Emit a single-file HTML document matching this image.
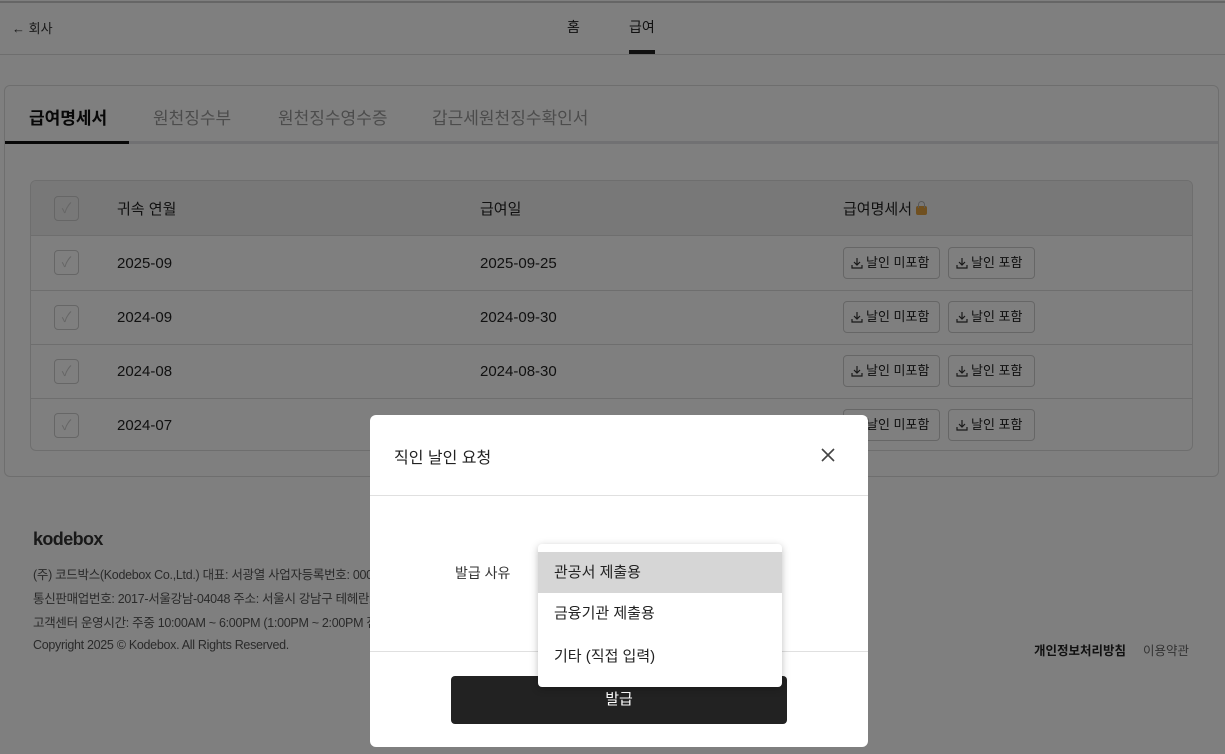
<!DOCTYPE html>
<html><head><meta charset="utf-8"><style>
*{box-sizing:border-box;margin:0;padding:0}
body{width:1225px;height:754px;overflow:hidden;background:#fff;font-family:"Liberation Sans","Noto Sans CJK KR",sans-serif;color:#222;position:relative}
.abs{position:absolute;white-space:nowrap}
.topline{position:absolute;left:0;top:0;width:1225px;height:3px;border-bottom:2px solid #ccc}
.hdr{position:absolute;left:0;top:54px;width:1225px;height:1px;background:#ddd}
.panel{position:absolute;left:4px;top:85px;width:1215px;height:392px;border:1px solid #ddd;border-radius:6px;background:#fff}
.tabline{position:absolute;left:5px;top:141px;width:1213px;height:3px;background:#e3e3e6}
.tabact{position:absolute;left:5px;top:141px;width:124px;height:3px;background:#111}
.tbl{position:absolute;left:30px;top:180px;width:1163px;height:271px;border:1px solid #ddd;border-radius:6px;overflow:hidden}
.row{position:absolute;left:0;width:100%;border-bottom:1px solid #ddd}
.cb{position:absolute;left:23px;width:25px;height:25px;border:1px solid #ccc;border-radius:4px;color:#ccc;font-size:14px;text-align:center;line-height:23px}
.cell{position:absolute;font-size:15px;color:#222}
.btn{position:absolute;height:32px;border:1px solid #ccc;border-radius:4px;font-size:13px;line-height:30px;padding-left:7px;color:#222;background:#fff}
.btn svg{vertical-align:-2px;margin-right:3px}
.ov{position:absolute;left:0;top:0;width:1225px;height:754px;background:rgba(0,0,0,0.5)}
.modal{position:absolute;left:370px;top:415px;width:498px;height:332px;background:#fff;border-radius:6px}
.dd{position:absolute;left:538px;top:544px;width:244px;height:143px;background:#fff;border-radius:4px;box-shadow:0 2px 8px rgba(0,0,0,.25)}
.dd div{position:absolute;left:0;width:244px;height:41px;font-size:15px;line-height:41px;padding-left:16px;color:#222}
.foot{font-size:12.5px;color:#555;letter-spacing:-0.3px}
</style></head><body>
<div class="topline"></div>
<div class="abs" style="left:12px;top:18px;font-size:13px;color:#333">← 회사</div>
<div class="abs" style="left:567px;top:17px;font-size:14px;">홈</div>
<div class="abs" style="left:629px;top:17px;font-size:14px;">급여</div>
<div class="abs" style="left:629px;top:50px;width:26px;height:4px;background:#222"></div>
<div class="hdr"></div>
<div class="panel"></div>
<div class="tabline"></div><div class="tabact"></div>
<div class="abs" style="left:29px;top:104px;font-size:17px;font-weight:bold;color:#111">급여명세서</div>
<div class="abs" style="left:153px;top:104px;font-size:17px;color:#999">원천징수부</div>
<div class="abs" style="left:278px;top:104px;font-size:17px;color:#999">원천징수영수증</div>
<div class="abs" style="left:432px;top:104px;font-size:17px;color:#999">갑근세원천징수확인서</div>
<div class="tbl">
 <div class="row" style="top:0;height:55px;background:#f0f0f0"><div class="cb" style="top:15px">✓</div><div class="cell" style="left:86px;top:17px">귀속 연월</div><div class="cell" style="left:449px;top:17px">급여일</div><div class="cell" style="left:812px;top:17px">급여명세서 <span style="display:inline-block;width:11px;height:9px;background:#e0a040;border-radius:2px;vertical-align:-1px;position:relative"><span style="position:absolute;left:2px;top:-5px;width:7px;height:7px;border:1.5px solid #b0b0b0;border-bottom:none;border-radius:4px 4px 0 0"></span></span></div></div>
 <div class="row" style="top:55px;height:55px"><div class="cb" style="top:14px">✓</div><div class="cell" style="left:86px;top:19px">2025-09</div><div class="cell" style="left:449px;top:19px">2025-09-25</div></div>
 <div class="row" style="top:110px;height:54px"><div class="cb" style="top:14px">✓</div><div class="cell" style="left:86px;top:18px">2024-09</div><div class="cell" style="left:449px;top:18px">2024-09-30</div></div>
 <div class="row" style="top:164px;height:54px"><div class="cb" style="top:14px">✓</div><div class="cell" style="left:86px;top:18px">2024-08</div><div class="cell" style="left:449px;top:18px">2024-08-30</div></div>
 <div class="row" style="top:218px;height:53px;border-bottom:none"><div class="cb" style="top:14px">✓</div><div class="cell" style="left:86px;top:18px">2024-07</div><div class="cell" style="left:449px;top:18px">2024-07-25</div></div>
</div>
<div class="btn" style="left:843px;top:247px;width:97px"><svg width="12" height="12" viewBox="0 0 12 12" fill="none" stroke="#333" stroke-width="1.2"><path d="M6 1v7M3 5l3 3 3-3M1 8v3h10V8"/></svg>날인 미포함</div>
<div class="btn" style="left:948px;top:247px;width:87px"><svg width="12" height="12" viewBox="0 0 12 12" fill="none" stroke="#333" stroke-width="1.2"><path d="M6 1v7M3 5l3 3 3-3M1 8v3h10V8"/></svg>날인 포함</div>
<div class="btn" style="left:843px;top:301px;width:97px"><svg width="12" height="12" viewBox="0 0 12 12" fill="none" stroke="#333" stroke-width="1.2"><path d="M6 1v7M3 5l3 3 3-3M1 8v3h10V8"/></svg>날인 미포함</div>
<div class="btn" style="left:948px;top:301px;width:87px"><svg width="12" height="12" viewBox="0 0 12 12" fill="none" stroke="#333" stroke-width="1.2"><path d="M6 1v7M3 5l3 3 3-3M1 8v3h10V8"/></svg>날인 포함</div>
<div class="btn" style="left:843px;top:355px;width:97px"><svg width="12" height="12" viewBox="0 0 12 12" fill="none" stroke="#333" stroke-width="1.2"><path d="M6 1v7M3 5l3 3 3-3M1 8v3h10V8"/></svg>날인 미포함</div>
<div class="btn" style="left:948px;top:355px;width:87px"><svg width="12" height="12" viewBox="0 0 12 12" fill="none" stroke="#333" stroke-width="1.2"><path d="M6 1v7M3 5l3 3 3-3M1 8v3h10V8"/></svg>날인 포함</div>
<div class="btn" style="left:843px;top:409px;width:97px"><svg width="12" height="12" viewBox="0 0 12 12" fill="none" stroke="#333" stroke-width="1.2"><path d="M6 1v7M3 5l3 3 3-3M1 8v3h10V8"/></svg>날인 미포함</div>
<div class="btn" style="left:948px;top:409px;width:87px"><svg width="12" height="12" viewBox="0 0 12 12" fill="none" stroke="#333" stroke-width="1.2"><path d="M6 1v7M3 5l3 3 3-3M1 8v3h10V8"/></svg>날인 포함</div>
<div class="abs" style="left:33px;top:529px;font-size:18px;font-weight:bold;color:#333;letter-spacing:-0.6px">kodebox</div>
<div class="abs foot" style="left:33px;top:564px">(주) 코드박스(Kodebox Co.,Ltd.) 대표: 서광열 사업자등록번호: 000-00-00000</div>
<div class="abs foot" style="left:33px;top:588px">통신판매업번호: 2017-서울강남-04048 주소: 서울시 강남구 테헤란로</div>
<div class="abs foot" style="left:33px;top:612px">고객센터 운영시간: 주중 10:00AM ~ 6:00PM (1:00PM ~ 2:00PM 점심시간)</div>
<div class="abs foot" style="left:33px;top:638px">Copyright 2025 © Kodebox. All Rights Reserved.</div>
<div class="abs" style="left:1034px;top:640px;font-size:12.5px;font-weight:bold;color:#222">개인정보처리방침</div>
<div class="abs" style="left:1143px;top:640px;font-size:12.5px;color:#666">이용약관</div>
<div class="ov"></div>
<div class="modal">
 <div class="abs" style="left:24px;top:29px;font-size:16px;color:#222">직인 날인 요청</div>
 <svg class="abs" style="left:451px;top:33px" width="14" height="14" viewBox="0 0 14 14" stroke="#444" stroke-width="1.6"><path d="M1 1l12 12M13 1L1 13"/></svg>
 <div class="abs" style="left:0;top:80px;width:498px;height:1px;background:#e0e0e0"></div>
 <div class="abs" style="left:85px;top:148px;font-size:14px;color:#333">발급 사유</div>
 <div class="abs" style="left:0;top:236px;width:498px;height:1px;background:#e0e0e0"></div>
 <div class="abs" style="left:81px;top:261px;width:336px;height:48px;background:#222;border-radius:4px;color:#fff;font-size:15px;text-align:center;line-height:48px">발급</div>
</div>
<div class="dd">
 <div style="top:8px;background:#d6d6d6">관공서 제출용</div>
 <div style="top:49px">금융기관 제출용</div>
 <div style="top:92px">기타 (직접 입력)</div>
</div>
</body></html>
